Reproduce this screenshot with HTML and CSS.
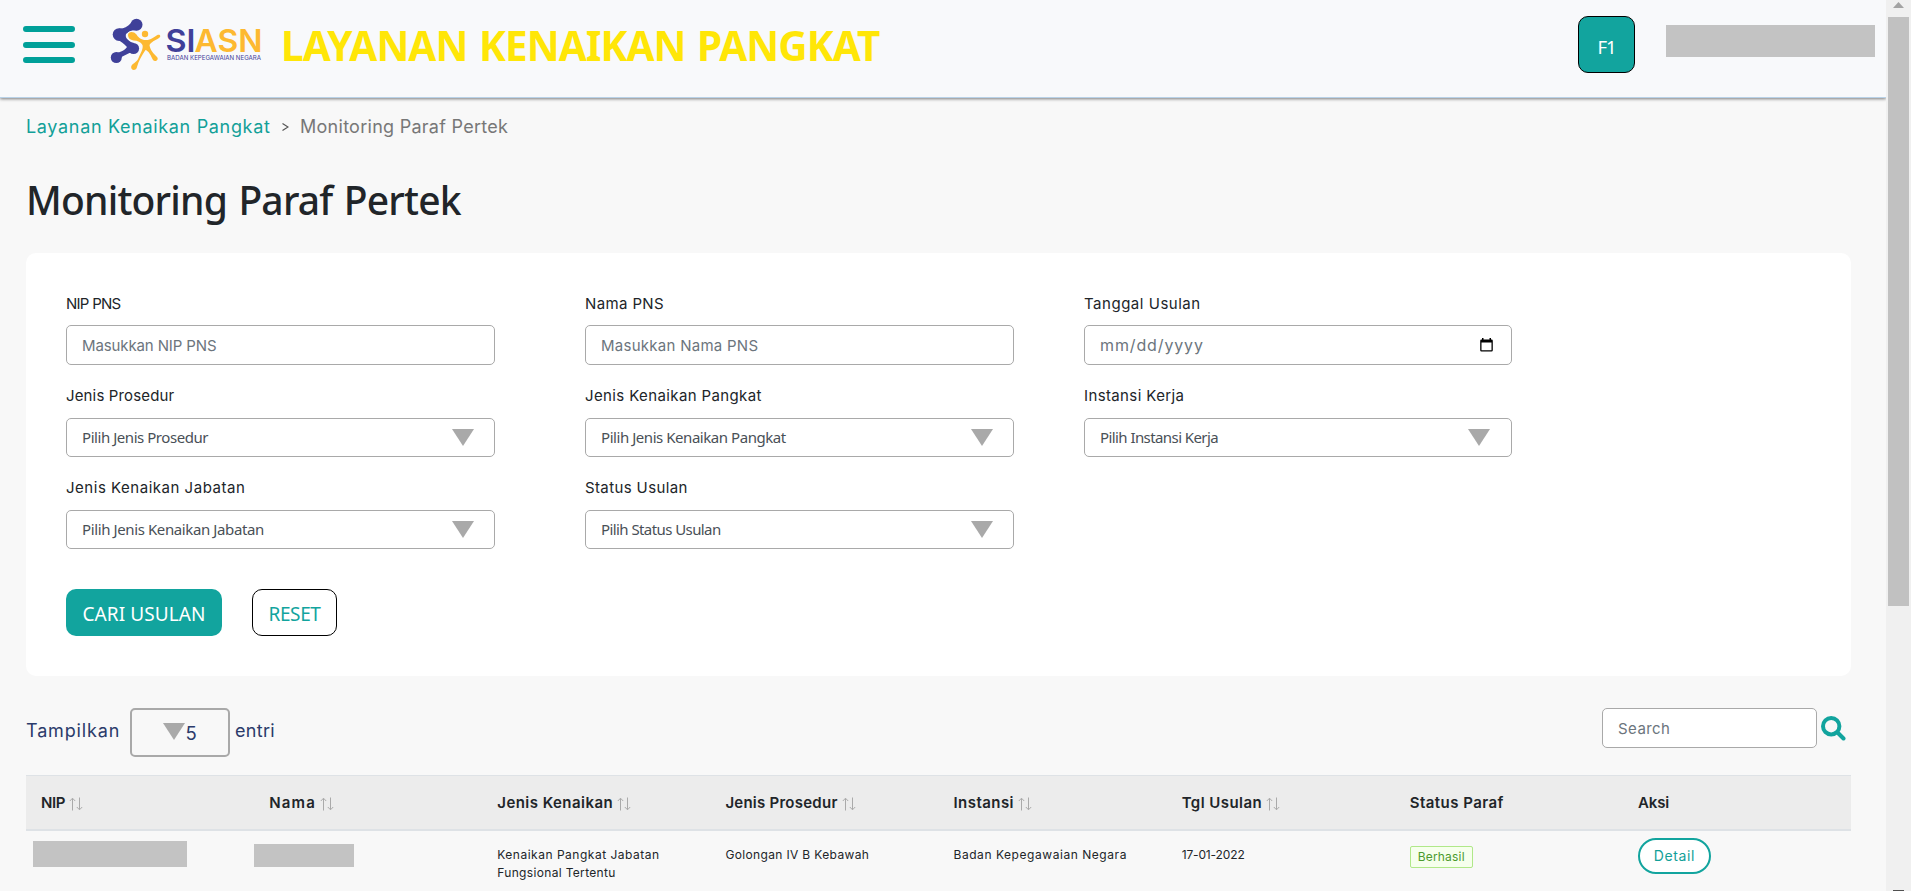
FILE: index.html
```html
<!DOCTYPE html>
<html lang="id">
<head>
<meta charset="utf-8">
<title>Monitoring Paraf Pertek</title>
<link rel="stylesheet" href="styles.css">
</head>
<body>
<svg class="sprite" aria-hidden="true">
  <symbol id="sort" viewBox="0 0 14 14"><path d="M3.500 13.500V1.500M.8 4L3.500 1.200L6.200 4M10.500 .5V12.500M7.800 10L10.500 12.800L13.200 10"/></symbol>
  <symbol id="caret" viewBox="0 0 22 17"><path d="M0 0H22L11 17Z"/></symbol>
</svg>
<div class="window">
  <div class="page">
    <header class="topbar">
      <svg class="menu-icon" viewBox="0 0 52 38"><path d="M3 3h46M3 19h46M3 34h46"/></svg>
      <svg class="logo" viewBox="108 16 156 56">
        <g class="logo-navy">
          <path class="logo-link" d="M136.500 24.500L119 34.500L134 48.500L116 57.500"/>
          <circle cx="136.500" cy="24.800" r="6"/><circle cx="119" cy="34.500" r="6.300"/><circle cx="133.500" cy="48.500" r="5.600"/><circle cx="116.300" cy="57.500" r="5.500"/>
          <path d="M119 28.500C123 29 127 27 131 23L138 30C134 30 129 31 126 34C125 37 127 41 134 43L131 53C127 52 123 53 120 60L113 53C119 53 124 51 127 47C124 44 121 41 117 40Z"/>
        </g>
        <circle class="logo-halo-dot" cx="132.500" cy="36" r="5.500"/>
        <g class="logo-gold">
          <circle cx="145" cy="34" r="3.200"/>
          <path d="M128 35C128 31.500 133.500 30.500 136.500 34.500C139 38.500 142 40 146 40C151 40 154 37 157 35.200C160 33.500 161.500 36.500 159 38C155 40.500 151 42 149.500 45C150 50 154 54 157 57C159.500 60 155 62.500 153 60C151 56 149 51 145.500 50C142 55 138.500 61 137 67C136.500 71 130.500 71 131.200 66.500C132 63.500 136.500 63 138.500 58C140.500 53 143.500 49 142.500 45C141 42 137.500 40.500 133.500 40.500C130 40 128 38 128 35Z"/>
        </g>
        <text class="logo-name logo-navy" x="165.500" y="52" textLength="30" lengthAdjust="spacingAndGlyphs">SI</text>
        <text class="logo-name logo-gold" x="194.500" y="52" textLength="68" lengthAdjust="spacingAndGlyphs">ASN</text>
        <text class="logo-sub" x="167" y="60" textLength="94" lengthAdjust="spacingAndGlyphs">BADAN KEPEGAWAIAN NEGARA</text>
      </svg>
      <div class="app-title">LAYANAN KENAIKAN PANGKAT</div>
      <div class="avatar">F1</div>
      <div class="user-name"></div>
    </header>
    <main class="content">
      <nav class="breadcrumb"><a class="crumb-link">Layanan Kenaikan Pangkat</a><svg class="crumb-sep" viewBox="0 0 7 8"><path d="M.5 .5L6 4L.5 7.500"/></svg><span class="crumb-here">Monitoring Paraf Pertek</span></nav>
      <h1 class="heading">Monitoring Paraf Pertek</h1>
      <section class="card">
        <div class="filters">
          <div class="field"><label class="label label-nip">NIP PNS</label><div class="input input-nip">Masukkan NIP PNS</div></div>
          <div class="field"><label class="label">Nama PNS</label><div class="input">Masukkan Nama PNS</div></div>
          <div class="field"><label class="label label-date">Tanggal Usulan</label><div class="input input-date">mm/dd/yyyy<svg class="calendar" viewBox="0 0 13 14"><path fill-rule="evenodd" d="M2 0h1.500v1.500h6V0H11v1.500h.5a1.300 1.300 0 0 1 1.300 1.300v9.400a1.300 1.300 0 0 1-1.300 1.300h-10a1.300 1.300 0 0 1-1.300-1.300V2.800a1.300 1.300 0 0 1 1.300-1.300H2ZM1.500 4.500v7.700h10V4.500Z"/></svg></div></div>
          <div class="field"><label class="label label-proc">Jenis Prosedur</label><div class="select">Pilih Jenis Prosedur<svg class="caret"><use href="#caret"/></svg></div></div>
          <div class="field"><label class="label">Jenis Kenaikan Pangkat</label><div class="select">Pilih Jenis Kenaikan Pangkat<svg class="caret"><use href="#caret"/></svg></div></div>
          <div class="field"><label class="label">Instansi Kerja</label><div class="select select-tight">Pilih Instansi Kerja<svg class="caret"><use href="#caret"/></svg></div></div>
          <div class="field"><label class="label label-date">Jenis Kenaikan Jabatan</label><div class="select select-wide">Pilih Jenis Kenaikan Jabatan<svg class="caret"><use href="#caret"/></svg></div></div>
          <div class="field"><label class="label">Status Usulan</label><div class="select select-tight">Pilih Status Usulan<svg class="caret"><use href="#caret"/></svg></div></div>
        </div>
        <div class="actions"><button class="btn btn-search">CARI USULAN</button><button class="btn btn-reset">RESET</button></div>
      </section>
      <div class="toolbar">
        <span class="show">Tampilkan</span>
        <div class="page-size"><svg class="size-caret"><use href="#caret"/></svg>5</div>
        <span class="entries">entri</span>
        <div class="search">Search</div>
        <svg class="search-icon" viewBox="0 0 25 25"><circle cx="10.200" cy="10.200" r="8.200"/><path d="M17 17L22.500 22.500"/></svg>
      </div>
      <div class="table">
        <div class="row head">
          <div class="th th-nip">NIP<svg class="sort"><use href="#sort"/></svg></div>
          <div class="th th-name">Nama<svg class="sort"><use href="#sort"/></svg></div>
          <div class="th">Jenis Kenaikan<svg class="sort"><use href="#sort"/></svg></div>
          <div class="th th-proc">Jenis Prosedur<svg class="sort"><use href="#sort"/></svg></div>
          <div class="th">Instansi<svg class="sort"><use href="#sort"/></svg></div>
          <div class="th">Tgl Usulan<svg class="sort"><use href="#sort"/></svg></div>
          <div class="th">Status Paraf</div>
          <div class="th th-action">Aksi</div>
        </div>
        <div class="row body-row">
          <div class="td"><div class="mask mask-nip"></div></div>
          <div class="td"><div class="mask mask-name"></div></div>
          <div class="td td-kind">Kenaikan Pangkat Jabatan<br><span class="second">Fungsional Tertentu</span></div>
          <div class="td td-proc">Golongan IV B Kebawah</div>
          <div class="td td-inst">Badan Kepegawaian Negara</div>
          <div class="td td-date">17-01-2022</div>
          <div class="td"><span class="badge">Berhasil</span></div>
          <div class="td"><button class="detail">Detail</button></div>
        </div>
      </div>
    </main>
  </div>
  <div class="scrollbar">
    <svg class="arrow-up" viewBox="0 0 11 6"><path d="M0 6L5.500 0L11 6Z"/></svg>
    <div class="thumb"></div>
    <div class="arrow-down"></div>
  </div>
</div>
</body>
</html>
```
FILE: styles.css
```css
*{box-sizing:border-box}
body{margin:0;background:#f8f8f8;font-family:Inter,"Open Sans",sans-serif;color:#212529;overflow:hidden}
.sprite{display:none}
.window{display:flex;height:891px;overflow:hidden}
.page{flex:1;min-width:0}

.topbar{display:flex;align-items:flex-start;height:98px;background:#f8f9fb;border-bottom:1px solid #b9d2e8;box-shadow:0 1px 3px rgba(0,0,0,.5)}
.menu-icon{flex:none;width:52px;height:38px;margin:26px 33px 0 23px;fill:none;stroke:#00a099;stroke-width:6;stroke-linecap:round}
.logo{flex:none;width:156px;height:56px;margin-top:16px}
.logo-navy{fill:#3f4099}
.logo-link{fill:none;stroke:#3f4099;stroke-width:4}
.logo-halo-dot{fill:#f8f9fb}
.logo-gold{fill:#fdb931}
.logo-name{font:600 31.500px Inter,sans-serif}
.logo-sub{font:400 6px Inter,sans-serif;fill:#3f4099}
.app-title{flex:1;margin:18px 0 0 17px;font:700 40.500px/56px "Noto Sans",sans-serif;letter-spacing:-.95px;word-spacing:2px;color:#ffe607;white-space:nowrap}
.avatar{width:57px;height:57px;margin:16px 31px 0 0;border:1px solid #000;border-radius:10px;background:#12a49e;color:#fff;font:18.500px/59px "Noto Sans",sans-serif;letter-spacing:-1px;text-align:center}
.user-name{width:209px;height:32px;margin:25px 11px 0 0;background:#c3c3c3}

.content{width:1851px;padding-left:26px}
.breadcrumb{display:flex;align-items:center;height:58px;font-size:18px;line-height:24px}
.crumb-link{width:245px;letter-spacing:.67px;color:#12a098;white-space:nowrap}
.crumb-sep{width:7px;height:8px;margin:0 11px;fill:none;stroke:#555;stroke-width:1.200}
.crumb-here{letter-spacing:.27px;color:#777}
.heading{margin:14px 0 24px;font:500 39px/59px "Noto Sans",sans-serif;letter-spacing:-.8px;word-spacing:2px;color:#212529}

.card{height:423px;padding:40px;border-radius:10px;background:#fff}
.filters{display:grid;grid-template-columns:519px 499px 428px;row-gap:20px}
.field{width:429px;height:72px}
.field:nth-child(3n){width:428px}
.label{display:block;height:22px;font-size:15px;line-height:22px;letter-spacing:.38px}
.label-nip{letter-spacing:-.75px}
.label-date{letter-spacing:.52px}
.label-proc{letter-spacing:.15px}
.input,.select,.search{display:flex;align-items:center;justify-content:space-between;border:1px solid #a9a9a9;border-radius:5px;padding-left:15px;background:#fff;white-space:nowrap}
.input{height:40px;margin-top:10px;font-size:15px;letter-spacing:.27px;color:#6c757d}
.input-nip{letter-spacing:-.12px}
.input-date{font-size:16px;letter-spacing:.87px}
.calendar{width:13px;height:14px;margin-right:18px;fill:#000}
.select{height:39px;margin-top:11px;padding-bottom:2px;font:15px "Noto Sans",sans-serif;letter-spacing:-.45px;color:#495057}
.select-wide{letter-spacing:-.39px}
.select-tight{letter-spacing:-.58px}
.caret{width:22px;height:17px;margin:1px 20px 0 0;fill:#a9a9a9}
.field:nth-child(3n) .caret{margin-right:21px}
.actions{display:flex;gap:30px;margin-top:40px}
.btn{height:47px;padding:2px 0 0;border-radius:10px;font:19px "Noto Sans",sans-serif}
.btn-search{width:156px;border:0;background:#12a49e;color:#fff;letter-spacing:.1px}
.btn-reset{width:85px;border:1px solid #000;background:#fff;color:#12a49e;letter-spacing:-.4px}

.toolbar{display:flex;align-items:flex-start;height:67px;margin-top:32px;color:#2b3b6b;font-size:18px;line-height:46px}
.show{width:104px;letter-spacing:.85px}
.page-size{display:flex;align-items:center;justify-content:center;width:100px;height:49px;border:2px solid #a9a9a9;border-radius:5px;font-size:18.500px}
.size-caret{width:22px;height:17px;margin:-2px 0 0;fill:#a9a9a9}
.entries{flex:1;margin-left:5px;letter-spacing:.3px}
.search{width:215px;height:40px;padding-top:1px;font-size:15px;line-height:20px;letter-spacing:.44px;color:#6c757d}
.search-icon{width:25px;height:25px;margin:8px 5px 0 4px;fill:none;stroke:#12a49e;stroke-width:4;stroke-linecap:round}

.row{display:grid;grid-template-columns:repeat(8,1fr)}
.head{height:56px;border-top:1px solid #dee2e6;border-bottom:2px solid #dee2e6;background:#ececec}
.th{display:flex;align-items:center;padding:0 0 1px 15px;font-size:15px;font-weight:600;letter-spacing:.45px;white-space:nowrap}
.th-nip{letter-spacing:-.4px}
.th-name{letter-spacing:1.200px}
.th-proc{letter-spacing:.25px}
.th-action{letter-spacing:-.1px}
.sort{width:14px;height:14px;margin:3px 0 0 4px;fill:none;stroke:#aaa;stroke-width:1}
.td{padding:15px 0 0 15px;font-size:12px;line-height:18px;white-space:nowrap;color:#212529}
.td-kind{letter-spacing:.51px}
.second{letter-spacing:.33px}
.td-proc{letter-spacing:.35px}
.td-inst{letter-spacing:.55px}
.td-date{letter-spacing:-.13px}
.mask{background:#c3c3c3}
.mask-nip{width:154px;height:26px;margin:-5px 0 0 -8px}
.mask-name{width:100px;height:23px;margin:-2px 0 0 -15px}
.badge{display:block;width:63px;height:22px;border:1px solid #b0e889;border-radius:2px;background:#f6ffed;color:#4b9b2d;letter-spacing:.2px;line-height:20px;text-align:center}
.detail{display:block;width:73px;height:36px;margin-top:-8px;border:2px solid #12a49e;border-radius:18px;padding:0 0 1px;background:#fff;color:#12a098;font:14px Inter,sans-serif;letter-spacing:.6px}

.scrollbar{display:flex;flex-direction:column;align-items:center;width:25px;padding:2px 0 0;background:#f0f0f0}
.arrow-up{width:11px;height:6px;fill:#a3a3a3}
.thumb{width:21px;height:589px;margin-top:9px;background:#c1c1c1}
.arrow-down{width:11px;height:1px;margin-top:auto;background:#505050}
```
